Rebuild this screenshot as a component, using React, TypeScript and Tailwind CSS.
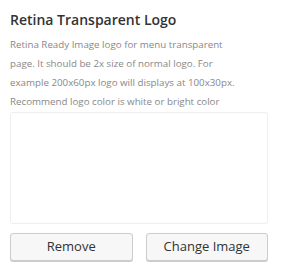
export default function App() {
  return (
    <div className="w-[281px] h-[272px] bg-white font-['Open_Sans',sans-serif]">
      <div className="pl-[10px] pr-[13px] pt-[10px]">
        <h3 className="text-[14px] leading-[20px] font-semibold text-[#333]">
          Retina Transparent Logo
        </h3>
        <p className="mt-[5px] text-[9.75px] leading-[19px] text-[#888] whitespace-nowrap">
          Retina Ready Image logo for menu transparent
          <br />
          page. It should be 2x size of normal logo. For
          <br />
          example 200x60px logo will displays at 100x30px.
          <br />
          Recommend logo color is white or bright color
        </p>
        <div className="mt-[1px] h-[112px] border border-[#eee] rounded-[3px] bg-white" />
        <div className="mt-[9px] flex gap-[13px]">
          <button className="flex-1 h-[28px] rounded-[3px] border border-[#ccc] bg-[#f7f7f7] shadow-[0_1px_0_#ccc] text-[13px] text-[#333]">
            Remove
          </button>
          <button className="flex-1 h-[28px] rounded-[3px] border border-[#ccc] bg-[#f7f7f7] shadow-[0_1px_0_#ccc] text-[13px] text-[#333]">
            Change Image
          </button>
        </div>
      </div>
    </div>
  );
}
